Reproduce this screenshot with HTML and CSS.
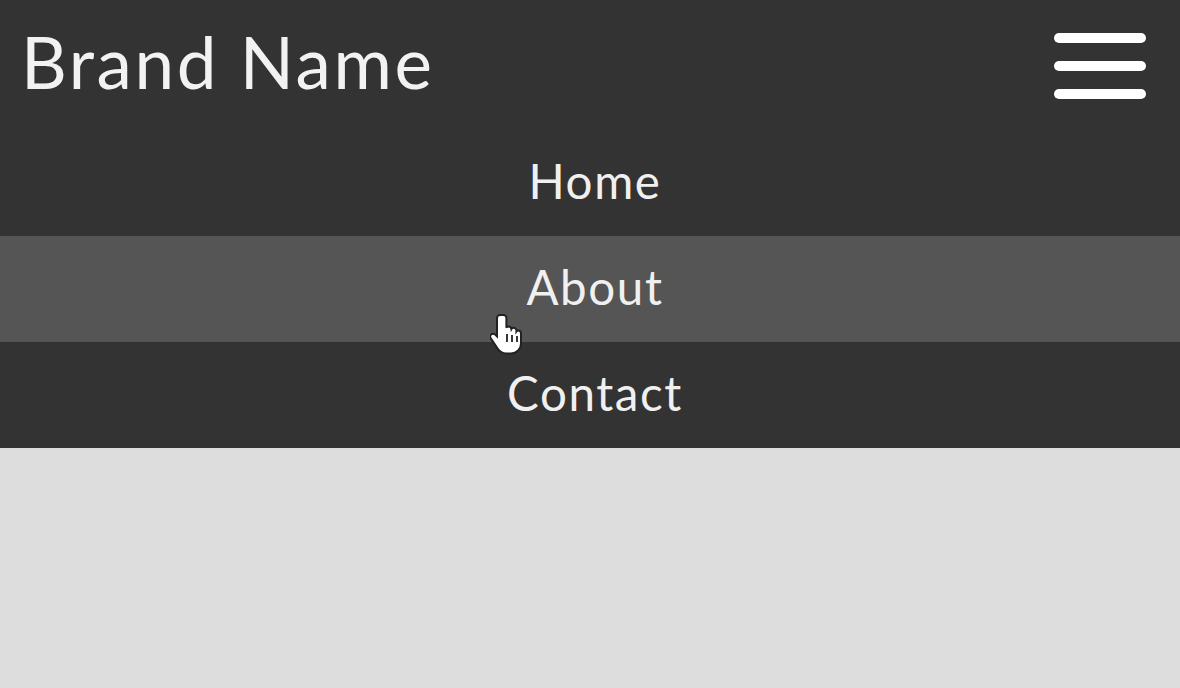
FILE: index.html
```html
<!DOCTYPE html>
<html>
<head>
<meta charset="utf-8">
<link rel="stylesheet" href="styles.css">
</head>
<body>
<header class="navbar">
  <div class="top">
    <div class="brand">Brand Name</div>
    <button class="burger" aria-label="Menu">
      <span class="bar"></span>
      <span class="bar"></span>
      <span class="bar"></span>
    </button>
  </div>
  <nav class="menu">
    <a class="item" href="#">Home</a>
    <a class="item active" href="#">About
      <svg class="cursor" width="34" height="46" viewBox="0 0 17 23">
        <path d="M5 1.5c-.8 0-1.5.7-1.5 1.5v9.2l-.9-.9c-.6-.6-1.6-.6-2.1 0-.5.5-.5 1.3-.1 1.9l3.5 5.2c.9 1.4 2.5 2.3 4.2 2.3h2.4c2.8 0 5-2.2 5-5v-5c0-.8-.6-1.4-1.4-1.4-.4 0-.7.1-.9.4v-.4c0-.8-.6-1.4-1.4-1.4-.5 0-.9.2-1.1.6-.1-.7-.7-1.2-1.4-1.2-.5 0-.9.2-1.1.6V3c0-.8-.7-1.5-1.5-1.5z" fill="#fff" stroke="#222" stroke-width="1"/>
        <path d="M8.5 11v4M11 11.5v3.5M13.5 12v3" stroke="#222" stroke-width="0.9" fill="none"/>
      </svg>
    </a>
    <a class="item" href="#">Contact</a>
  </nav>
</header>
</body>
</html>
```
FILE: styles.css
```css
html, body {
  margin: 0;
  padding: 0;
}
body {
  background: #dddddd;
  font-family: Lato, "Open Sans", sans-serif;
  width: 1180px;
  height: 688px;
  overflow: hidden;
}
.navbar {
  background: #333333;
}
.top {
  height: 130px;
  display: flex;
  align-items: flex-start;
  justify-content: space-between;
  padding: 0 34px 0 21px;
}
.brand {
  color: #f2f2f2;
  font-size: 71px;
  font-weight: 400;
  line-height: 1;
  margin-top: 26px;
  letter-spacing: 2.6px;
}
.burger {
  background: none;
  border: 0;
  padding: 0;
  margin-top: 33px;
  width: 92px;
  display: flex;
  flex-direction: column;
  gap: 18px;
}
.bar {
  display: block;
  width: 92px;
  height: 10px;
  border-radius: 5px;
  background: #ffffff;
}
.menu {
  display: flex;
  flex-direction: column;
}
.item {
  position: relative;
  height: 106px;
  display: flex;
  align-items: center;
  justify-content: center;
  padding: 0 0 5px 10px;
  color: #f0f0f0;
  text-decoration: none;
  font-size: 47.5px;
  font-weight: 400;
  letter-spacing: 1.6px;
  box-sizing: border-box;
}
.item.active {
  background: #555555;
}
.cursor {
  position: absolute;
  left: 490px;
  top: 76px;
}
```
